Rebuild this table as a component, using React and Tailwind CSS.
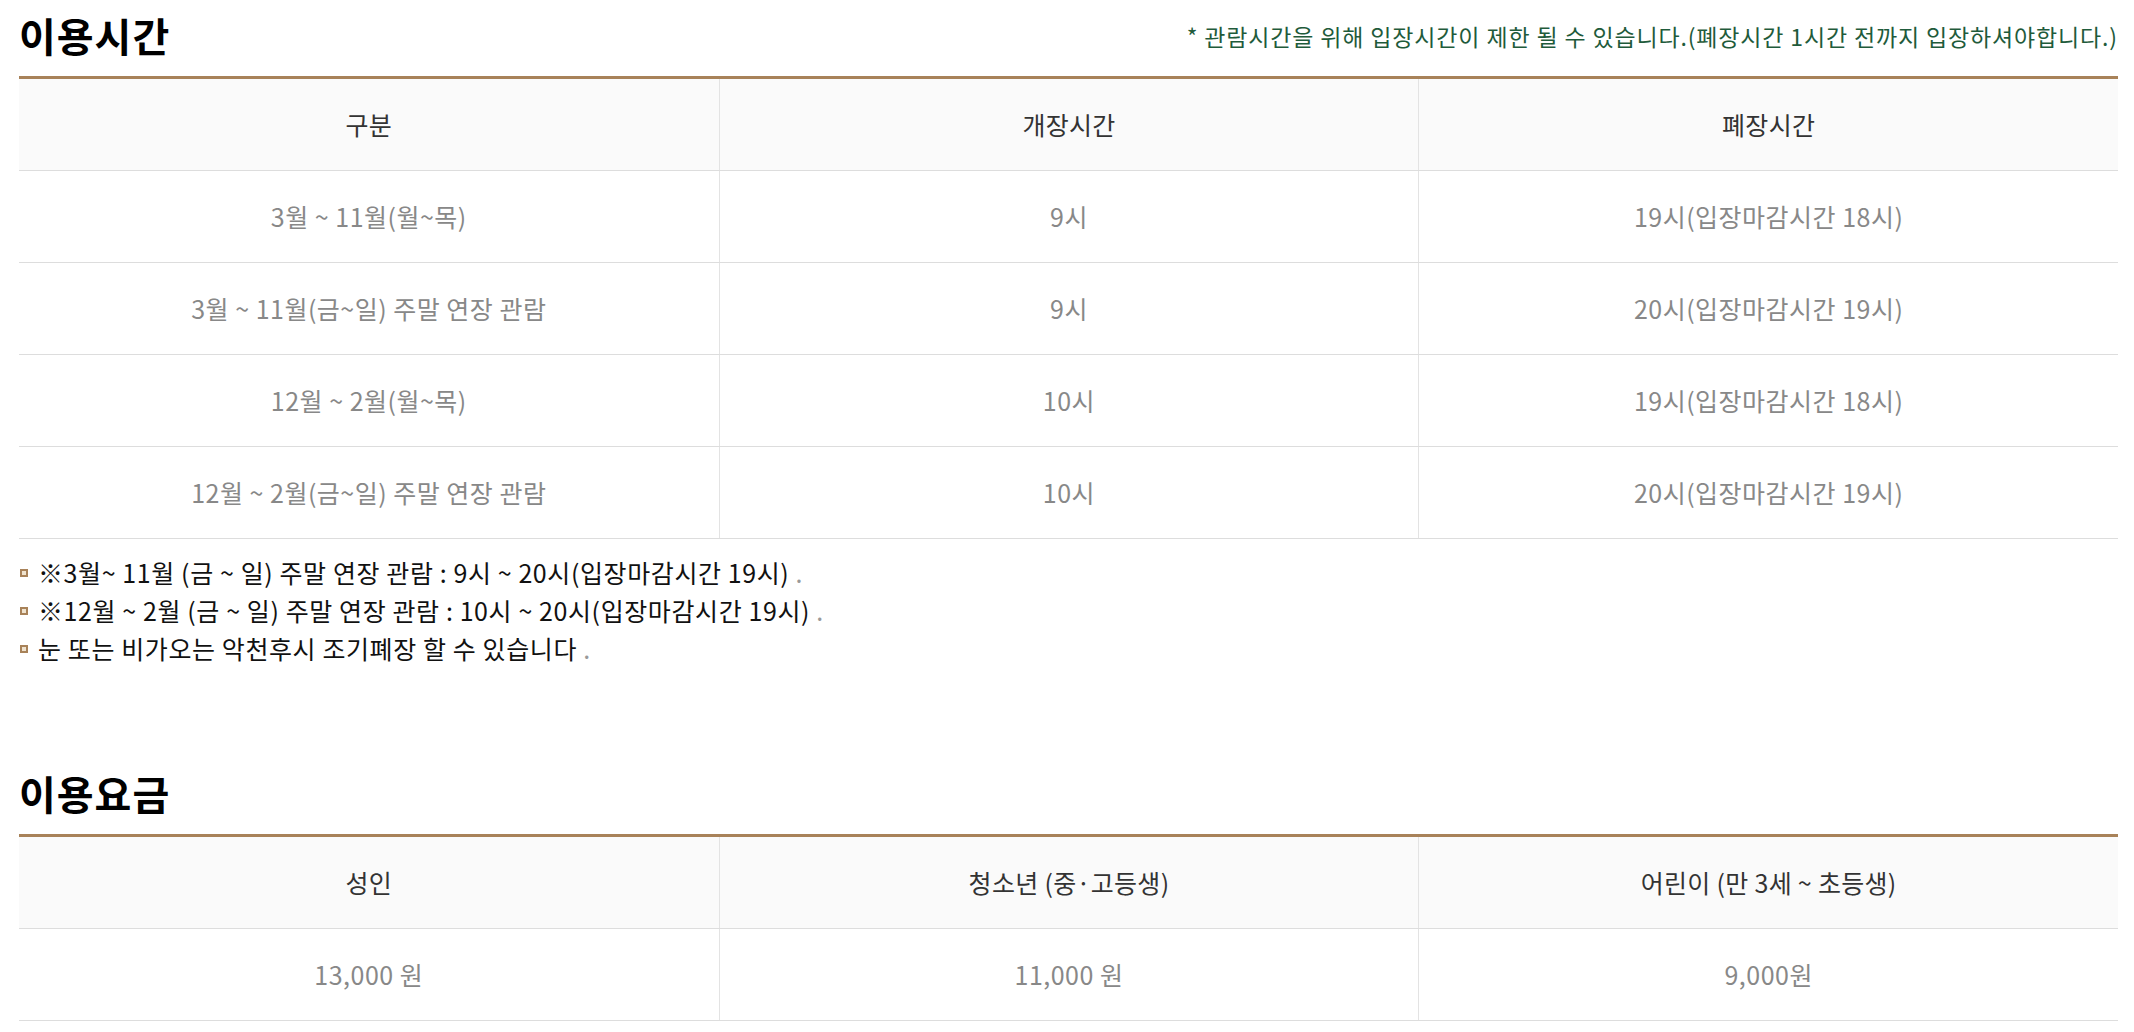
import React from "react";

const FONT = { fontFamily: '"Noto Sans CJK KR", "Noto Sans", sans-serif' };

function Table({ headers, rows }) {
  return (
    <div className="border-t-[3px] border-[#a88259]">
      <div className="grid grid-cols-3 bg-[#fafafa] border-b border-[#dddddd]">
        {headers.map((h, i) => (
          <div
            key={i}
            className={`h-[91px] flex items-center justify-center text-[25px] text-[#333333] tracking-[0.3px] ${i > 0 ? "border-l border-[#e3e3e3]" : ""}`}
          >
            {h}
          </div>
        ))}
      </div>
      {rows.map((r, ri) => (
        <div key={ri} className="grid grid-cols-3 border-b border-[#dddddd]">
          {r.map((c, i) => (
            <div
              key={i}
              className={`h-[91px] flex items-center justify-center text-[25px] text-[#888888] tracking-[0.5px] ${i > 0 ? "border-l border-[#e3e3e3]" : ""}`}
            >
              {c}
            </div>
          ))}
        </div>
      ))}
    </div>
  );
}

function Note({ children }) {
  return (
    <li className="flex items-center h-[38px]">
      <span className="w-[8px] h-[8px] ml-[1px] mr-[10px] border-2 border-[#a88259] bg-[#efe3cf] shrink-0" />
      <span className="text-[25px] text-[#111111] tracking-[0.6px]">{children}</span>
    </li>
  );
}

export default function App() {
  return (
    <div className="bg-white w-full min-h-screen pl-[19px] pr-[16px]" style={FONT}>
      <section>
        <div className="h-[76px] flex items-center justify-between pb-[6px]">
          <h2 className="text-[40px] font-bold text-black leading-none tracking-[1px]">이용시간</h2>
          <p className="text-[23px] text-[#1f5b3b] leading-none tracking-[0.85px] pt-[2px]">
            * 관람시간을 위해 입장시간이 제한 될 수 있습니다.(폐장시간 1시간 전까지 입장하셔야합니다.)
          </p>
        </div>
        <Table
          headers={["구분", "개장시간", "폐장시간"]}
          rows={[
            ["3월 ~ 11월(월~목)", "9시", "19시(입장마감시간 18시)"],
            ["3월 ~ 11월(금~일) 주말 연장 관람", "9시", "20시(입장마감시간 19시)"],
            ["12월 ~ 2월(월~목)", "10시", "19시(입장마감시간 18시)"],
            ["12월 ~ 2월(금~일) 주말 연장 관람", "10시", "20시(입장마감시간 19시)"],
          ]}
        />
        <ul className="mt-[15px]">
          <Note>
            ※3월~ 11월 (금 ~ 일) 주말 연장 관람 : 9시 ~ 20시(입장마감시간 19시) <span className="text-[#999999]">.</span>
          </Note>
          <Note>
            ※12월 ~ 2월 (금 ~ 일) 주말 연장 관람 : 10시 ~ 20시(입장마감시간 19시) <span className="text-[#999999]">.</span>
          </Note>
          <Note>
            눈 또는 비가오는 악천후시 조기폐장 할 수 있습니다 <span className="text-[#999999]">.</span>
          </Note>
        </ul>
      </section>
      <section className="mt-[90px]">
        <div className="h-[76px] flex items-center pb-[6px]">
          <h2 className="text-[40px] font-bold text-black leading-none tracking-[1px]">이용요금</h2>
        </div>
        <Table
          headers={["성인", "청소년 (중·고등생)", "어린이 (만 3세 ~ 초등생)"]}
          rows={[["13,000 원", "11,000 원", "9,000원"]]}
        />
      </section>
    </div>
  );
}
